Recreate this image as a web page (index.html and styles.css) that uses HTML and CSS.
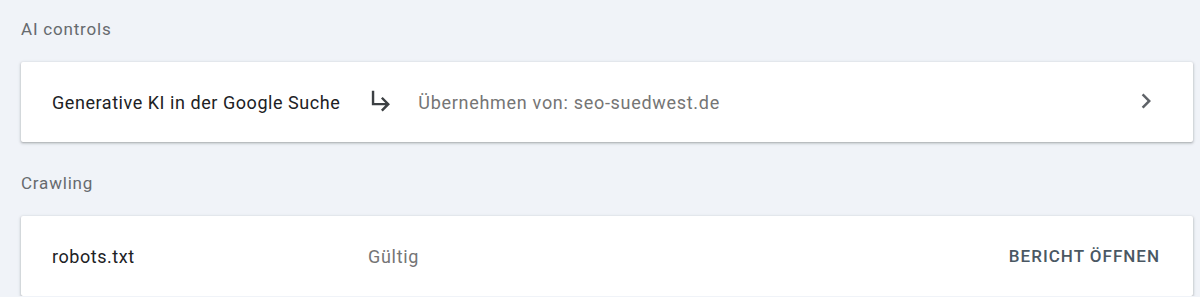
FILE: index.html
```html
<!DOCTYPE html>
<html lang="de">
<head>
<meta charset="utf-8">
<title>Einstellungen</title>
<link rel="stylesheet" href="styles.css">
</head>
<body>
<main class="page">
  <section class="section">
    <h2 class="section-label">AI controls</h2>
    <div class="card">
      <div class="row">
        <span class="row-name">Generative KI in der Google Suche</span>
        <svg class="icon sub-arrow" viewBox="0 0 24 24" width="29" height="29" aria-hidden="true"><path d="M19 15l-6 6-1.42-1.42L15.17 16H4V4h2v10h9.17l-3.59-3.58L13 9l6 6z"/></svg>
        <span class="row-value">Übernehmen von: seo-suedwest.de</span>
        <svg class="icon chevron" viewBox="0 0 24 24" width="30" height="30" aria-hidden="true"><path d="M10 6L8.59 7.41 13.17 12l-4.58 4.59L10 18l6-6z"/></svg>
      </div>
    </div>
  </section>
  <section class="section">
    <h2 class="section-label">Crawling</h2>
    <div class="card">
      <div class="row">
        <span class="row-name fixed">robots.txt</span>
        <span class="row-value">Gültig</span>
        <a class="action" href="#">Bericht öffnen</a>
      </div>
    </div>
  </section>
</main>
</body>
</html>
```

FILE: styles.css
```css
html, body {
  margin: 0;
  padding: 0;
  background: #f0f3f8;
  font-family: Roboto, "Noto Sans", Arial, sans-serif;
  color: #202124;
}

.page {
  padding: 2px 7px 0 21px;
  display: flex;
  flex-direction: column;
  gap: 14px;
}

.section-label {
  margin: 0;
  padding: 15px 0 21px;
  font-size: 17px;
  line-height: 24px;
  font-weight: 400;
  letter-spacing: 0.8px;
  color: #666a6e;
}

.card {
  background: #fff;
  border-radius: 2px;
  box-shadow: 0 1px 2px rgba(60, 64, 67, 0.3), 0 1px 3px 1px rgba(60, 64, 67, 0.12);
}

.row {
  height: 80px;
  display: flex;
  align-items: center;
  padding: 0 33px 0 31px;
  font-size: 18px;
  letter-spacing: 0.55px;
}

.row-name {
  color: #202124;
}

.row-name.fixed {
  width: 316px;
  flex: none;
}

.sub-arrow {
  margin: -3px 22px 0 27px;
  fill: #3c4043;
}

.row-value {
  color: #757575;
  letter-spacing: 0.7px;
  flex: 1;
}

.icon {
  flex: none;
  display: block;
}

.chevron {
  fill: #5f6368;
  margin: -2px -1px 0 0;
}

.action {
  text-decoration: none;
  text-transform: uppercase;
  font-size: 17px;
  font-weight: 500;
  letter-spacing: 1px;
  color: #4a5863;
}
```
